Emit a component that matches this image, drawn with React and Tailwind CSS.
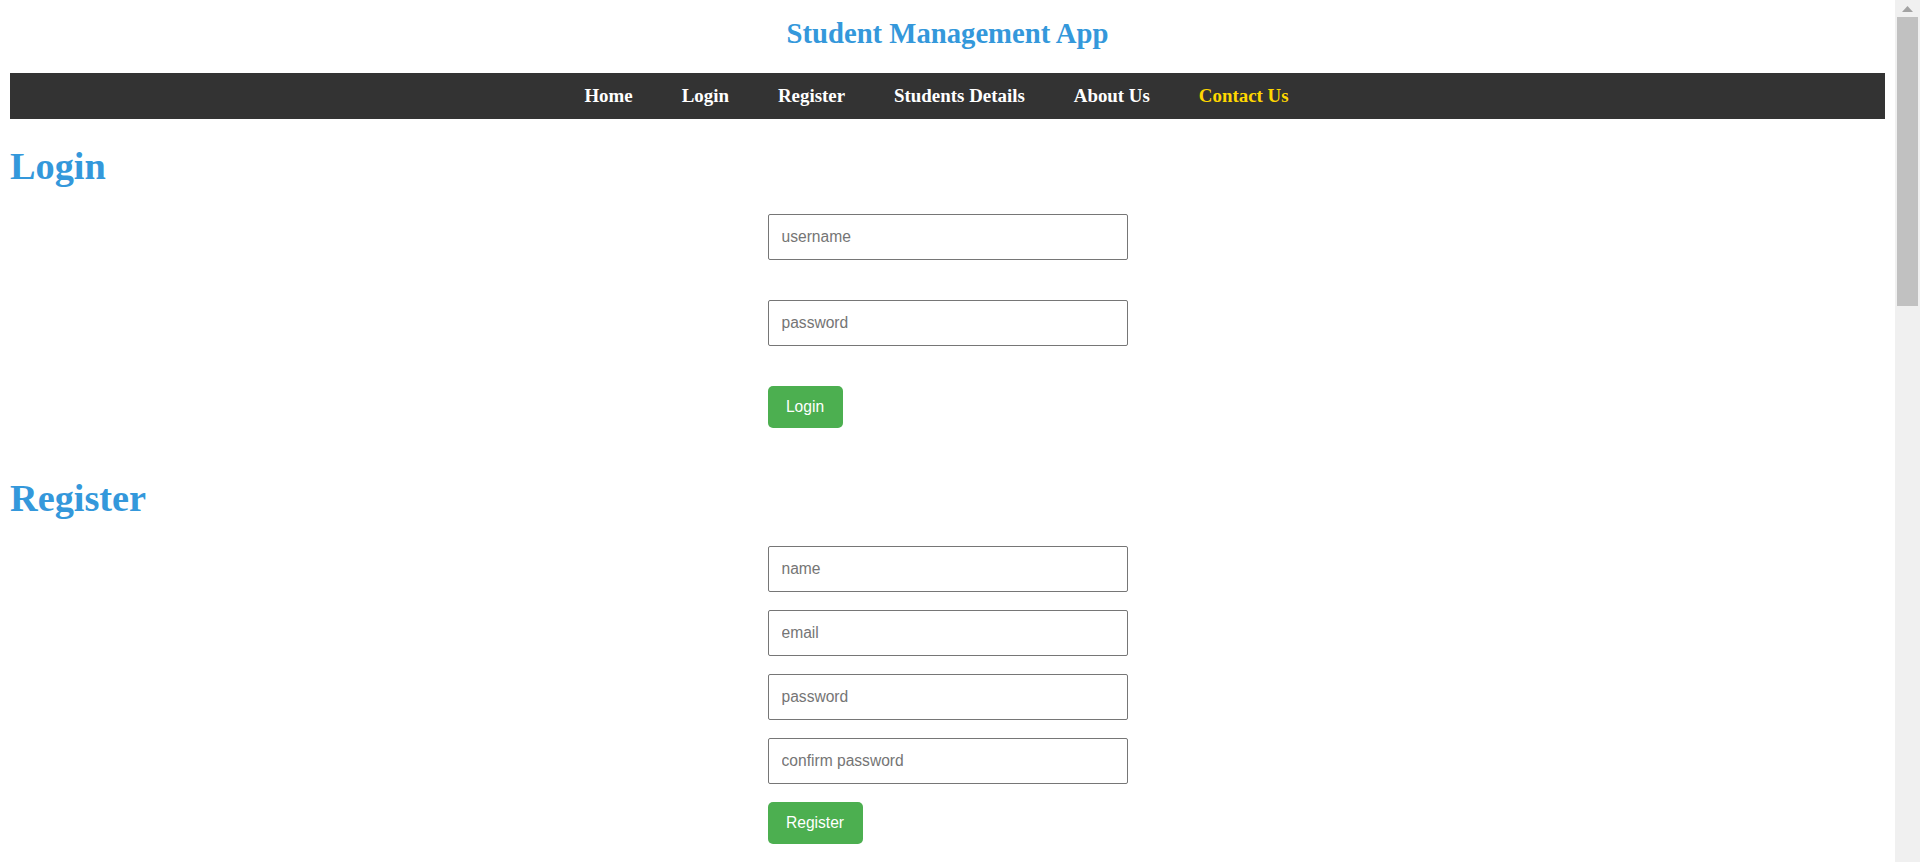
const links = ["Home", "Login", "Register", "Students Details", "About Us", "Contact Us"];

function Field({ placeholder, type = "text", className = "" }) {
  return (
    <input
      type={type}
      placeholder={placeholder}
      className={`w-[360px] h-[46px] px-[13px] border border-[#767676] rounded-[2px] bg-white text-[15.6px] text-black placeholder:text-[#757575] outline-none ${className}`}
      style={{ fontFamily: '"Liberation Sans", Arial, sans-serif' }}
    />
  );
}

function GreenButton({ children, className = "" }) {
  return (
    <button
      className={`h-[42px] rounded-[5px] bg-[#4caf50] text-white text-[15.6px] ${className}`}
      style={{ fontFamily: '"Liberation Sans", Arial, sans-serif' }}
    >
      {children}
    </button>
  );
}

function Scrollbar() {
  return (
    <div className="w-[25px] shrink-0 bg-[#f0f0f0] flex flex-col items-center">
      <div className="h-[17px] flex items-center justify-center">
        <svg width="11" height="6" viewBox="0 0 11 6">
          <polygon points="5.5,0 11,6 0,6" fill="#a3a3a3" />
        </svg>
      </div>
      <div className="w-[21px] h-[289px] bg-[#c1c1c1]" />
    </div>
  );
}

export default function App() {
  return (
    <div
      className="flex h-screen overflow-hidden bg-white"
      style={{ fontFamily: '"Liberation Serif", "Times New Roman", serif' }}
    >
      <div className="flex-1 px-[10px] overflow-hidden">
        <h2 className="mt-[17px] text-center text-[28.7px] leading-[32px] font-bold text-[#3498db]">
          Student Management App
        </h2>

        <nav className="mt-[24px] h-[46px] bg-[#333333] flex items-center justify-center gap-[49px] pr-[22px]">
          {links.map((l) => (
            <a
              key={l}
              href="#"
              className={`text-[18.9px] leading-[22px] font-bold ${l === "Contact Us" ? "text-[#ffd700]" : "text-white"}`}
            >
              {l}
            </a>
          ))}
        </nav>

        <h1 className="mt-[26px] text-[38.3px] leading-[43px] font-bold text-[#3498db]">Login</h1>
        <form className="mt-[26px] w-[360px] mx-auto flex flex-col items-start gap-[40px]">
          <Field placeholder="username" />
          <Field placeholder="password" type="password" />
          <GreenButton className="w-[75px]">Login</GreenButton>
        </form>

        <h1 className="mt-[49px] text-[38.3px] leading-[43px] font-bold text-[#3498db]">Register</h1>
        <form className="mt-[26px] w-[360px] mx-auto flex flex-col items-start gap-[18px]">
          <Field placeholder="name" />
          <Field placeholder="email" type="email" />
          <Field placeholder="password" type="password" />
          <Field placeholder="confirm password" type="password" />
          <GreenButton className="w-[95px]">Register</GreenButton>
        </form>
      </div>
      <Scrollbar />
    </div>
  );
}
